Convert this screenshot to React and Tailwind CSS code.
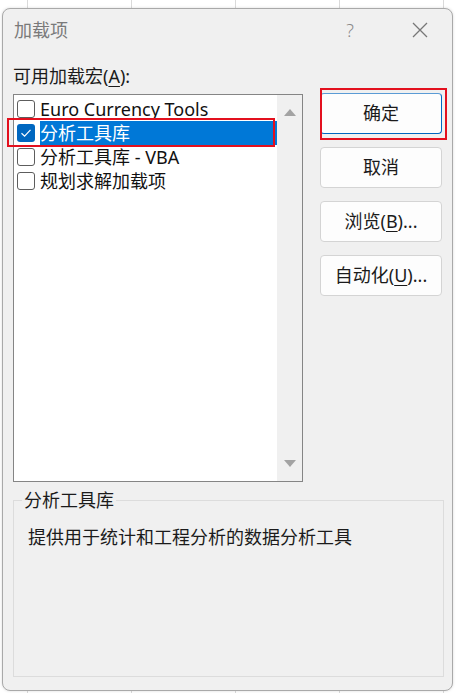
import { useState } from "react";

const FONT = { fontFamily: '"Noto Sans", "Noto Sans CJK SC", sans-serif' };

const items = [
  { id: "euro", label: "Euro Currency Tools", checked: false },
  { id: "atp", label: "分析工具库", checked: true },
  { id: "vba", label: "分析工具库 - VBA", checked: false },
  { id: "solver", label: "规划求解加载项", checked: false },
];

const CheckBox = ({ checked }) =>
  checked ? (
    <span className="w-[18px] h-[18px] rounded-[3px] bg-[#0067c0] flex items-center justify-center shrink-0">
      <svg width="12" height="10" viewBox="0 0 12 10" fill="none">
        <path d="M1.5 5.2 L4.6 8.2 L10.5 1.8" stroke="#fff" strokeWidth="1.2" />
      </svg>
    </span>
  ) : (
    <span className="w-[18px] h-[18px] rounded-[3px] border border-[#5d5d5d] bg-white shrink-0" />
  );

const Button = ({ children, primary }) => (
  <button
    className={
      "w-[122px] h-[41px] rounded-[4px] bg-[#fdfdfd] text-[18px] text-[#1b1b1b] flex items-center justify-center " +
      (primary ? "border border-[#0067c0] border-t-[#5a9bd5]" : "border border-[#d4d4d4]")
    }
  >
    {children}
  </button>
);

export default function App() {
  const [selected] = useState("atp");

  return (
    <div
      className="w-[456px] h-[693px] bg-white pl-[2px] pt-[8px] bg-[linear-gradient(90deg,transparent_27px,#dadada_27px,#dadada_28px,transparent_28px,transparent_131px,#dadada_131px,#dadada_132px,transparent_132px,transparent_235px,#dadada_235px,#dadada_236px,transparent_236px,transparent_339px,#dadada_339px,#dadada_340px,transparent_340px,transparent_443px,#dadada_443px,#dadada_444px,transparent_444px)]"
      style={FONT}
    >
      <div className="w-[451px] h-[683px] rounded-[8px] border border-[#a9a9a9] bg-[#f0f0f0] flex flex-col shadow-[0_0_3px_rgba(0,0,0,0.15)]">
        {/* title bar */}
        <div className="h-[42px] flex items-center pl-[11px] pr-[24px]">
          <span className="text-[18px] text-[#7a7a7a]">加载项</span>
          <span className="ml-auto text-[18px] text-[#8a8a8a] font-light">?</span>
          <svg className="ml-[58px]" width="16" height="16" viewBox="0 0 16 16">
            <path d="M1 1 L15 15 M15 1 L1 15" stroke="#777" strokeWidth="1.3" />
          </svg>
        </div>

        <div className="flex-1 flex flex-col pl-[10px] pr-[9px]">
          <div className="text-[18px] text-[#1b1b1b] leading-[20px] mt-[15px]">
            可用加载宏(<span className="underline underline-offset-[3px]">A</span>):
          </div>

          <div className="flex mt-[8px]">
            {/* list box */}
            <div className="relative w-[290px] h-[388px] border border-[#858585] bg-white flex">
              <div className="flex-1 pt-[2px]">
                {items.map((it) => {
                  const sel = it.id === selected;
                  return (
                    <div key={it.id} className="h-[24px] flex items-center">
                      <span className="pl-[3px] pr-[5px] flex items-center">
                        <CheckBox checked={it.checked} />
                      </span>
                      <span
                        className={
                          "h-full flex-1 flex items-center text-[18px] " +
                          (sel ? "bg-[#0078d7] text-white" : "text-[#111]")
                        }
                      >
                        {it.label}
                      </span>
                    </div>
                  );
                })}
              </div>
              <div className="w-[25px] bg-[#f0f0f0] flex flex-col items-center justify-between py-[14px]">
                <svg width="12" height="7" viewBox="0 0 12 7">
                  <path d="M6 0 L12 7 L0 7 Z" fill="#a3a3a3" />
                </svg>
                <svg width="12" height="7" viewBox="0 0 12 7">
                  <path d="M0 0 L12 0 L6 7 Z" fill="#a3a3a3" />
                </svg>
              </div>
              {/* red annotation */}
              <div className="absolute left-[-7px] top-[23px] w-[268px] h-[29px] border-2 border-[#e3101e]" />
            </div>

            {/* buttons */}
            <div className="relative ml-[17px] flex flex-col gap-[13px] mt-[-1px]">
              <Button primary>确定</Button>
              <Button>取消</Button>
              <Button>
                <span>
                  浏览(<span className="underline underline-offset-[3px]">B</span>)...
                </span>
              </Button>
              <Button>
                <span>
                  自动化(<span className="underline underline-offset-[3px]">U</span>)...
                </span>
              </Button>
              <div className="absolute left-0 top-[-5px] w-[127px] h-[52px] border-2 border-[#e3101e]" />
            </div>
          </div>

          {/* group box */}
          <div className="relative mt-[18px] w-[431px] h-[177px] border border-[#dcdcdc]">
            <span className="absolute left-[8px] top-[-12px] bg-[#f0f0f0] px-[2px] text-[18px] leading-[22px] text-[#1b1b1b]">
              分析工具库
            </span>
            <div className="pt-[24px] pl-[14px] text-[18px] text-[#1b1b1b] leading-[24px]">
              提供用于统计和工程分析的数据分析工具
            </div>
          </div>
        </div>
      </div>
    </div>
  );
}
